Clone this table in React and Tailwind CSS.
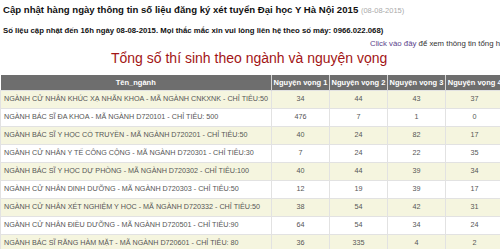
const rows = [
  ['NGÀNH CỬ NHÂN KHÚC XẠ NHÃN KHOA - MÃ NGÀNH CNKXNK - CHỈ TIÊU:50', 34, 44, 43, 37],
  ['NGÀNH BÁC SĨ ĐA KHOA - MÃ NGÀNH D720101 - CHỈ TIÊU: 500', 476, 7, 1, 0],
  ['NGÀNH BÁC SĨ Y HỌC CỔ TRUYỀN - MÃ NGÀNH D720201 - CHỈ TIÊU:50', 40, 24, 82, 17],
  ['NGÀNH CỬ NHÂN Y TẾ CÔNG CỘNG - MÃ NGÀNH D720301 - CHỈ TIÊU:30', 7, 24, 22, 35],
  ['NGÀNH BÁC SĨ Y HỌC DỰ PHÒNG - MÃ NGÀNH D720302 - CHỈ TIÊU:100', 40, 44, 39, 34],
  ['NGÀNH CỬ NHÂN DINH DƯỠNG - MÃ NGÀNH D720303 - CHỈ TIÊU:50', 12, 19, 39, 17],
  ['NGÀNH CỬ NHÂN XÉT NGHIỆM Y HỌC - MÃ NGÀNH D720332 - CHỈ TIÊU:50', 38, 54, 42, 31],
  ['NGÀNH CỬ NHÂN ĐIỀU DƯỠNG - MÃ NGÀNH D720501 - CHỈ TIÊU:90', 64, 54, 34, 24],
  ['NGÀNH BÁC SĨ RĂNG HÀM MẶT - MÃ NGÀNH D720601 - CHỈ TIÊU: 80', 36, 335, 4, 2],
]

const App = () => {
  return (
    <div className="w-[500px] h-[249px] overflow-hidden bg-white font-['Liberation_Sans',Arial,sans-serif]">
      <div className="pl-[3px] pt-[3px] h-[20px] text-[9.6px] leading-[14px] font-bold text-[#111] whitespace-nowrap">
        Cập nhật hàng ngày thông tin số liệu đăng ký xét tuyển Đại học Y Hà Nội 2015{' '}
        <span className="text-[7.5px] font-normal text-[#aaa]">(08-08-2015)</span>
      </div>
      <div className="pl-[3px] pt-[6px] h-[17px] text-[7.75px] leading-[10px] font-bold text-[#111] whitespace-nowrap">
        Số liệu cập nhật đến 16h ngày 08-08-2015. Mọi thắc mắc xin vui lòng liên hệ theo số máy: 0966.022.068)
      </div>
      <div className="pl-[370px] pt-[1px] h-[13px] text-[7.8px] leading-[12px] text-[#333] whitespace-nowrap overflow-hidden">
        <span className="text-[#5b3f8c]">Click vào đây</span> để xem thông tin tổng hợp
      </div>
      <div className="h-[25px] pl-[111px] text-[14px] leading-[16px] text-[#a31515] whitespace-nowrap">
        Tổng số thí sinh theo ngành và nguyện vọng
      </div>
      <table className="w-[503px] border-collapse text-[7.2px] table-fixed">
        <colgroup>
          <col className="w-[271px]" />
          <col className="w-[58px]" />
          <col className="w-[58px]" />
          <col className="w-[58px]" />
          <col className="w-[58px]" />
        </colgroup>
        <thead>
          <tr className="h-[15px] bg-[#6e6e6e] text-white font-bold text-[7.5px] whitespace-nowrap">
            <th className="border-r border-[#d5d5d5] p-0">Tên_ngành</th>
            <th className="border-r border-[#d5d5d5] p-0">Nguyện vọng 1</th>
            <th className="border-r border-[#d5d5d5] p-0">Nguyện vọng 2</th>
            <th className="border-r border-[#d5d5d5] p-0">Nguyện vọng 3</th>
            <th className="p-0">Nguyện vọng 4</th>
          </tr>
        </thead>
        <tbody className="text-[#555]">
          {rows.map((r, i) => (
            <tr key={i} className={'h-[18px] ' + (i % 2 === 0 ? 'bg-[#f5f5df]' : 'bg-white')}>
              <td className="border border-[#e2e2e2] pl-[3px] p-0 whitespace-nowrap overflow-hidden">{r[0]}</td>
              <td className="border border-[#e2e2e2] p-0 text-center">{r[1]}</td>
              <td className="border border-[#e2e2e2] p-0 text-center">{r[2]}</td>
              <td className="border border-[#e2e2e2] p-0 text-center">{r[3]}</td>
              <td className="border border-[#e2e2e2] p-0 text-center">{r[4]}</td>
            </tr>
          ))}
        </tbody>
      </table>
    </div>
  )
}

export default App
